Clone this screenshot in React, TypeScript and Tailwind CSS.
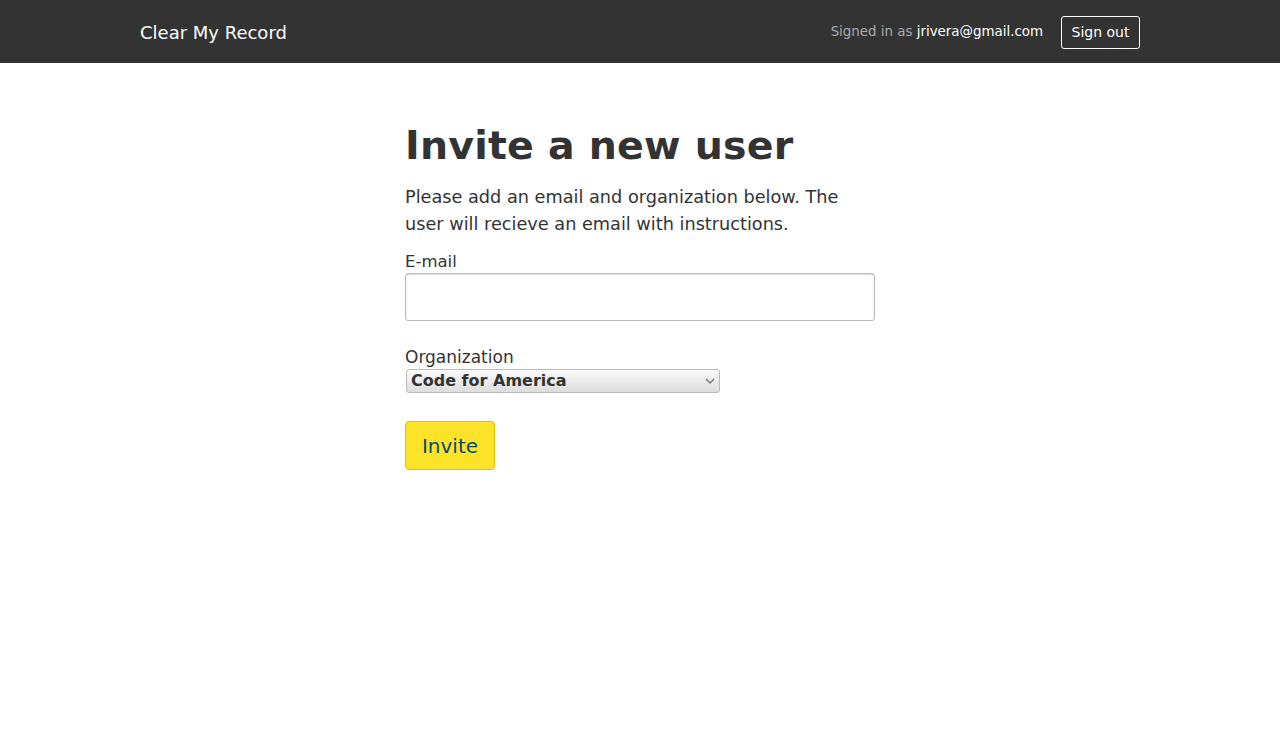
import React from "react";

export default function App() {
  return (
    <div className="min-h-[729px] bg-white text-[#333]" style={{ fontFamily: '"DejaVu Sans", sans-serif' }}>
      <nav className="h-[63px] bg-[#333]">
        <div className="mx-auto flex h-full w-[1000px] items-center justify-between">
          <div className="pt-[1px] text-[18px] text-white">Clear My Record</div>
          <div className="flex items-center">
            <span className="pt-[2px] text-[13.4px] text-[#aaa]">
              Signed in as <span className="text-white">jrivera@gmail.com</span>
            </span>
            <button className="ml-[18px] mt-[2px] h-[33px] w-[79px] rounded-[3px] border border-white text-[14px] text-white">
              Sign out
            </button>
          </div>
        </div>
      </nav>
      <main className="mx-auto w-[470px] pt-[58px]">
        <h1 className="text-[39.5px] font-bold leading-[48px] tracking-[0.2px]">Invite a new user</h1>
        <p className="mt-[15px] text-[17.7px] leading-[27px]">
          Please add an email and organization below. The user will recieve an email with instructions.
        </p>
        <label className="mt-[13px] block text-[16.5px] leading-[21px]">E-mail</label>
        <input
          type="email"
          className="mt-[1px] block h-[48px] w-[470px] rounded-[3px] border border-[#bbb] bg-white shadow-[inset_0_1px_2px_rgba(0,0,0,0.15)]"
        />
        <label className="mt-[26px] block text-[17px] leading-[20px]">Organization</label>
        <div className="relative mt-[2px] ml-[1px] h-[24px] w-[314px] rounded-[3px] border border-[#bbb] bg-gradient-to-b from-[#fafafa] to-[#ddd]">
          <span className="absolute left-[4px] top-[1px] text-[16px] font-bold leading-[20px] text-[#333]">Code for America</span>
          <svg className="absolute right-[4px] top-[7px]" width="10" height="8" viewBox="0 0 10 8">
            <path d="M1 2 L5 6 L9 2" fill="none" stroke="#777" strokeWidth="1.5" />
          </svg>
        </div>
        <button className="mt-[28px] h-[49px] w-[90px] rounded-[4px] border border-[#e0c000] bg-[#fde428] text-[20px] text-[#0a4a6e]">
          Invite
        </button>
      </main>
    </div>
  );
}
